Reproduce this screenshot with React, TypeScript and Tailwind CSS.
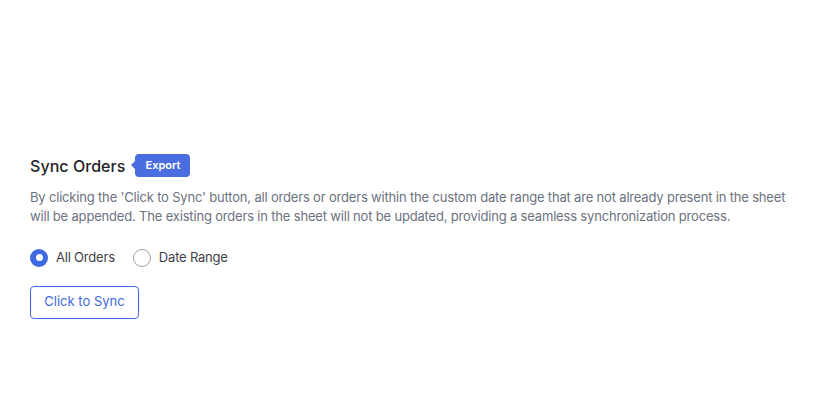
export default function App() {
  return (
    <div className="min-h-[397px] bg-white px-[30px] pt-[153px]" style={{ fontFamily: "Inter, 'Noto Sans', sans-serif" }}>
      <div className="flex items-center gap-[10px]">
        <h2 className="text-[16px] font-medium leading-[26px] tracking-[0.05px] text-[#1f2328]">Sync Orders</h2>
        <div className="relative -mt-[2px]">
          <span className="absolute left-[-4px] top-1/2 h-0 w-0 -translate-y-1/2 border-y-[4px] border-r-[4px] border-y-transparent border-r-[#4a6ee0]" />
          <span className="block rounded-[4px] bg-[#4a6ee0] px-[10px] py-[4px] text-[11px] font-semibold leading-[15px] text-white">
            Export
          </span>
        </div>
      </div>
      <p className="mt-[9px] max-w-[768px] text-[13px] leading-[19px] tracking-[-0.18px] text-[#6b7280]">
        By clicking the 'Click to Sync' button, all orders or orders within the custom date range that are not already present in the sheet will be appended. The existing orders in the sheet will not be updated, providing a seamless synchronization process.
      </p>
      <div className="mt-[22px] flex items-center gap-[18px] text-[13px] tracking-[-0.2px] text-[#3f3f46]">
        <label className="flex items-center gap-[8px]">
          <span className="flex h-[18px] w-[18px] items-center justify-center rounded-full bg-[#4169e1]">
            <span className="h-[7px] w-[7px] rounded-full bg-white" />
          </span>
          All Orders
        </label>
        <label className="flex items-center gap-[8px]">
          <span className="h-[18px] w-[18px] rounded-full border border-[#9ca3af] bg-white" />
          Date Range
        </label>
      </div>
      <button className="mt-[18px] h-[33px] w-[109px] rounded-[4px] border border-[#4169e1] bg-white text-[13px] text-[#4169e1]">
        Click to Sync
      </button>
    </div>
  )
}
